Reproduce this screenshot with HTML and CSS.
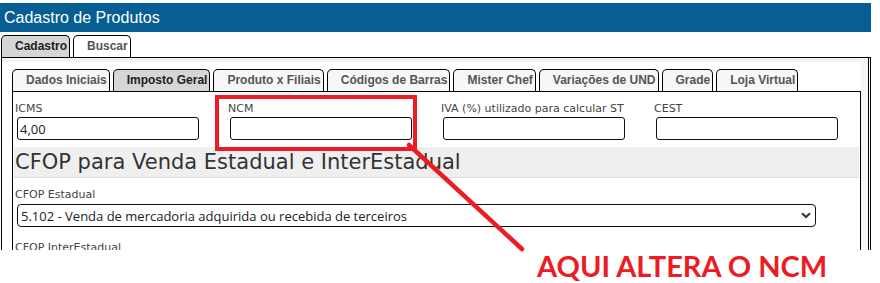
FILE: index.html
```html
<!DOCTYPE html>
<html lang="pt-BR">
  <head>
    <meta charset="UTF-8" />
    <meta name="viewport" content="width=device-width, initial-scale=1.0" />
    <title>Cadastro de Produtos</title>
    <link rel="stylesheet" href="styles.css">
  </head>
  <body>
    <div class="stage">
      <div class="screen">
        <div class="titlebar">Cadastro de Produtos</div>
        <ul class="tabs tabs-main">
          <li class="tab active">Cadastro</li>
          <li class="tab">Buscar</li>
        </ul>
        <div class="panel">
          <ul class="tabs tabs-sub">
            <li class="tab">Dados Iniciais</li>
            <li class="tab active">Imposto Geral</li>
            <li class="tab">Produto x Filiais</li>
            <li class="tab">Códigos de Barras</li>
            <li class="tab">Mister Chef</li>
            <li class="tab">Variações de UND</li>
            <li class="tab">Grade</li>
            <li class="tab">Loja Virtual</li>
          </ul>
          <div class="tab-body">
            <div class="fields">
              <div class="field">
                <label>ICMS</label>
                <input type="text" value="4,00" />
              </div>
              <div class="field">
                <label>NCM</label>
                <input type="text" value="" />
              </div>
              <div class="field">
                <label>IVA (%) utilizado para calcular ST</label>
                <input type="text" value="" />
              </div>
              <div class="field">
                <label>CEST</label>
                <input type="text" value="" />
              </div>
            </div>

            <h2 class="section-title">CFOP para Venda Estadual e InterEstadual</h2>

            <div class="field-wide">
              <label>CFOP Estadual</label>
              <div class="select-wrap">
                <select>
                  <option>5.102 - Venda de mercadoria adquirida ou recebida de terceiros</option>
                </select>
                <svg class="chevron" width="10" height="7" viewBox="0 0 10 7">
                  <path d="M1 1.2 L5 5 L9 1.2" fill="none" stroke="#333" stroke-width="2" />
                </svg>
              </div>
            </div>

            <div class="field-wide">
              <label class="next-label">CFOP InterEstadual</label>
            </div>
          </div>
        </div>
      </div>

      <!-- marcação em vermelho por cima da tela -->
      <svg class="markup" width="880" height="283" viewBox="0 0 880 283">
        <rect x="217" y="97" width="198" height="52" fill="none" stroke="#ec1c24" stroke-width="4" />
        <line x1="409" y1="145" x2="522" y2="249" stroke="#ec1c24" stroke-width="4.5" stroke-linecap="round" />
      </svg>
      <p class="note">AQUI ALTERA O NCM</p>
    </div>
  </body>
</html>
```

FILE: styles.css
```css
body {
  margin: 0;
  background: #fff;
}

.stage {
  position: relative;
  width: 880px;
  height: 283px;
  overflow: hidden;
}

.screen {
  width: 871px;
  height: 250px;
  padding-top: 3px;
  box-sizing: border-box;
  overflow: hidden;
}

.titlebar {
  height: 29px;
  line-height: 29px;
  padding-left: 4px;
  background: #065e92;
  color: #fff;
  font-family: "Liberation Sans", Arial, sans-serif;
  font-size: 16px;
}

.tabs {
  display: flex;
  gap: 3px;
  list-style: none;
  margin: 0;
  padding: 0;
}

.tabs-main {
  margin: 3px 0 0 1px;
}

.tab {
  height: 21px;
  line-height: 21px;
  padding: 0 2px 0 13px;
  border: 1px solid #000;
  border-bottom: 0;
  border-radius: 5px 5px 0 0;
  background: #fff;
  color: #555;
  font-family: "Liberation Sans", Arial, sans-serif;
  font-size: 12px;
  font-weight: bold;
  white-space: nowrap;
}

.tabs-sub .tab {
  background: #f7f7f7;
}

.tab.active,
.tabs-sub .tab.active {
  background: #d6d6d6;
  color: #222;
}

.panel {
  margin-left: 1px;
  width: 870px;
  min-height: 220px;
  box-sizing: border-box;
  padding: 11px 7px 0 10px;
  border: 1px solid #000;
  border-right: 3px double #000;
  border-bottom: 0;
  background: #fff;
  box-shadow: inset 0 4px 0 #f3f3f3, inset -7px 0 0 #f6f6f6;
}

.tab-body {
  min-height: 200px;
  border: 1px solid #000;
  border-bottom: 0;
  background: #fff;
}

.fields {
  display: grid;
  grid-template-columns: repeat(4, 213px);
  padding: 10px 0 0 2px;
}

.field label,
.field-wide label {
  display: block;
  height: 13px;
  line-height: 13px;
  color: #444;
  font-family: "DejaVu Sans", Verdana, sans-serif;
  font-size: 11px;
  white-space: nowrap;
}

.field input {
  display: block;
  width: 182px;
  height: 23px;
  margin: 2px 0 0 2px;
  padding: 0 2px;
  box-sizing: border-box;
  border: 1px solid #111;
  border-radius: 3px;
  color: #222;
  font-family: "Open Sans", sans-serif;
  font-size: 13px;
  outline: none;
}

.section-title {
  height: 30px;
  margin: 7px 1px 0;
  padding-left: 1px;
  line-height: 30px;
  background: #f0eff0;
  border-bottom: 1px solid #dcdcdc;
  color: #333;
  font-family: "DejaVu Sans", Verdana, sans-serif;
  font-size: 21px;
  font-weight: normal;
  white-space: nowrap;
}

.field-wide {
  padding-left: 2px;
}

.field-wide label {
  margin-top: 10px;
}

.field-wide .next-label {
  margin-top: 14px;
}

.select-wrap {
  position: relative;
  width: 799px;
  height: 23px;
  margin: 3px 0 0 2px;
}

.select-wrap select {
  appearance: none;
  -webkit-appearance: none;
  width: 100%;
  height: 23px;
  padding: 0 0 0 3px;
  box-sizing: border-box;
  border: 1px solid #111;
  border-radius: 4px;
  background: #fff;
  color: #222;
  font-family: "Open Sans", sans-serif;
  font-size: 13px;
  outline: none;
}

.chevron {
  position: absolute;
  right: 5px;
  top: 8px;
}

.markup {
  position: absolute;
  left: 0;
  top: 0;
  pointer-events: none;
}

.note {
  position: absolute;
  left: 537px;
  top: 251px;
  margin: 0;
  line-height: 29px;
  color: #ec1c24;
  font-family: Lato, "Open Sans", sans-serif;
  font-size: 29px;
  font-weight: bold;
  white-space: nowrap;
}
```
